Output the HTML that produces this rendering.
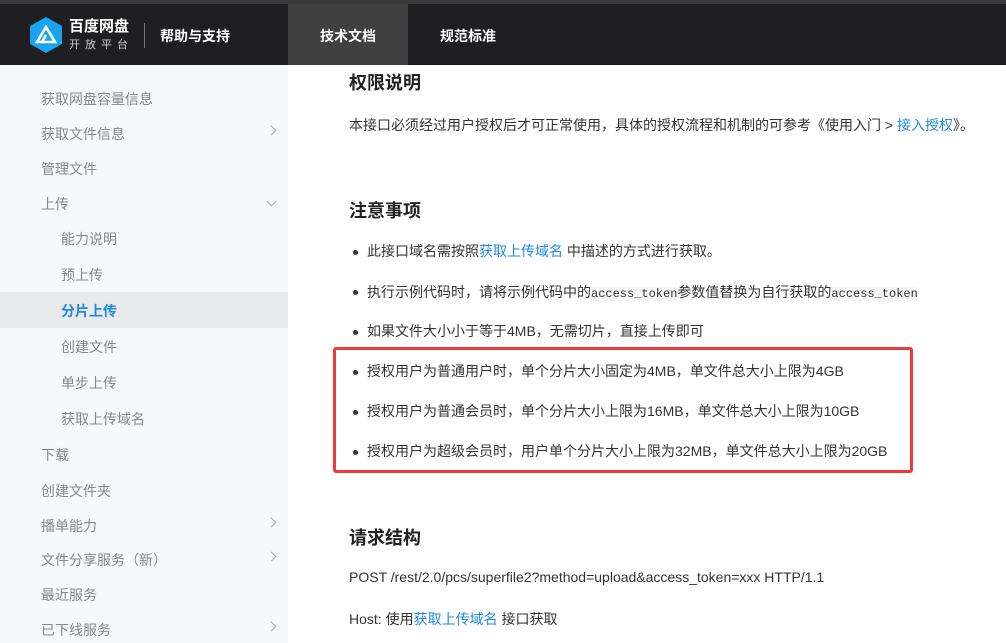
<!DOCTYPE html>
<html><head><meta charset="utf-8"><style>
*{margin:0;padding:0;box-sizing:border-box}
body{width:1006px;height:643px;overflow:hidden;background:#fff;font-family:"Liberation Sans","Noto Sans CJK SC",sans-serif;position:relative;color:#333}
.top{position:absolute;left:0;top:0;width:1006px;height:4px;background:#3a3a3a}
.hdr{position:absolute;left:0;top:4px;width:1006px;height:61px;background:#1f1f21;color:#fff}
.a{position:absolute;font-size:14px}
.sb{position:absolute;left:0;top:65px;width:288px;height:578px;background:#f7f8fa}
.si{position:absolute;font-size:14px;color:#888;left:41px}
.si.s{left:61px}
.chev{position:absolute;left:268px;width:7px;height:7px;border-right:1px solid #aaa;border-bottom:1px solid #aaa}
.t{position:absolute;left:349px;font-size:14px;color:#333;white-space:nowrap}
.h{position:absolute;left:349px;font-size:18px;font-weight:bold;color:#222}
.b{position:absolute;left:353px;width:5px;height:5px;border-radius:50%;background:#333}
a{color:#1e88e5;text-decoration:none}
code{font-family:"Liberation Mono",monospace;font-size:12px;background:#f6f6f6}
</style></head><body>
<div class="top"></div>
<div class="hdr">
<svg style="position:absolute;left:29px;top:13px" width="34" height="36" viewBox="0 0 34 36"><polygon points="17,0 33,9 33,27 17,36 1,27 1,9" fill="#1aa3ef"/><path d="M8 25 L17 10 L26 25 Z M13 25 L17 18" fill="none" stroke="#fff" stroke-width="2.6"/></svg>
<div class="a" style="left:69px;top:11px;font-size:15px;font-weight:bold">百度网盘</div>
<div class="a" style="left:69px;top:32px;font-size:11px;letter-spacing:5px;color:#ccc">开放平台</div>
<div style="position:absolute;left:144px;top:19px;width:1px;height:25px;background:#777"></div>
<div class="a" style="left:160px;top:22px;font-weight:bold">帮助与支持</div>
<div style="position:absolute;left:288px;top:0;width:120px;height:61px;background:#404040"></div>
<div class="a" style="left:320px;top:22px;font-weight:bold">技术文档</div>
<div class="a" style="left:440px;top:22px;font-weight:bold">规范标准</div>
</div>
<div class="sb"></div>
<div style="position:absolute;left:0;top:292px;width:288px;height:36px;background:#e8e9eb"></div>
<div class="si" style="top:89px">获取网盘容量信息</div>
<div class="si" style="top:124px">获取文件信息</div><div class="chev" style="top:127px;transform:rotate(-45deg)"></div>
<div class="si" style="top:159px">管理文件</div>
<div class="si" style="top:194px">上传</div><div class="chev" style="top:198px;transform:rotate(45deg)"></div>
<div class="si s" style="top:229px">能力说明</div>
<div class="si s" style="top:265px">预上传</div>
<div class="si s" style="top:301px;color:#1e88e5;font-weight:bold">分片上传</div>
<div class="si s" style="top:337px">创建文件</div>
<div class="si s" style="top:373px">单步上传</div>
<div class="si s" style="top:409px">获取上传域名</div>
<div class="si" style="top:445px">下载</div>
<div class="si" style="top:481px">创建文件夹</div>
<div class="si" style="top:516px">播单能力</div><div class="chev" style="top:519px;transform:rotate(-45deg)"></div>
<div class="si" style="top:550px">文件分享服务（新）</div><div class="chev" style="top:553px;transform:rotate(-45deg)"></div>
<div class="si" style="top:585px">最近服务</div>
<div class="si" style="top:620px">已下线服务</div><div class="chev" style="top:623px;transform:rotate(-45deg)"></div>

<div class="h" style="top:69px">权限说明</div>
<div class="t" style="top:115px">本接口必须经过用户授权后才可正常使用，具体的授权流程和机制的可参考《使用入门 &gt; <a>接入授权</a>》。</div>
<div class="h" style="top:197px">注意事项</div>
<div class="b" style="top:250px"></div><div class="t" style="left:367px;top:241px">此接口域名需按照<a>获取上传域名</a> 中描述的方式进行获取。</div>
<div class="b" style="top:290px"></div><div class="t" style="left:367px;top:282px">执行示例代码时，请将示例代码中的<code>access_token</code>参数值替换为自行获取的<code>access_token</code></div>
<div class="b" style="top:330px"></div><div class="t" style="left:367px;top:321px">如果文件大小小于等于4MB，无需切片，直接上传即可</div>
<div style="position:absolute;left:333px;top:347px;width:580px;height:126px;border:3px solid #f03a3a;border-radius:3px"></div>
<div class="b" style="top:370px"></div><div class="t" style="left:367px;top:361px">授权用户为普通用户时，单个分片大小固定为4MB，单文件总大小上限为4GB</div>
<div class="b" style="top:410px"></div><div class="t" style="left:367px;top:401px">授权用户为普通会员时，单个分片大小上限为16MB，单文件总大小上限为10GB</div>
<div class="b" style="top:450px"></div><div class="t" style="left:367px;top:441px">授权用户为超级会员时，用户单个分片大小上限为32MB，单文件总大小上限为20GB</div>
<div class="h" style="top:524px">请求结构</div>
<div class="t" style="top:569px">POST /rest/2.0/pcs/superfile2?method=upload&amp;access_token=xxx HTTP/1.1</div>
<div class="t" style="top:609px">Host: 使用<a>获取上传域名</a> 接口获取</div>
</body></html>
